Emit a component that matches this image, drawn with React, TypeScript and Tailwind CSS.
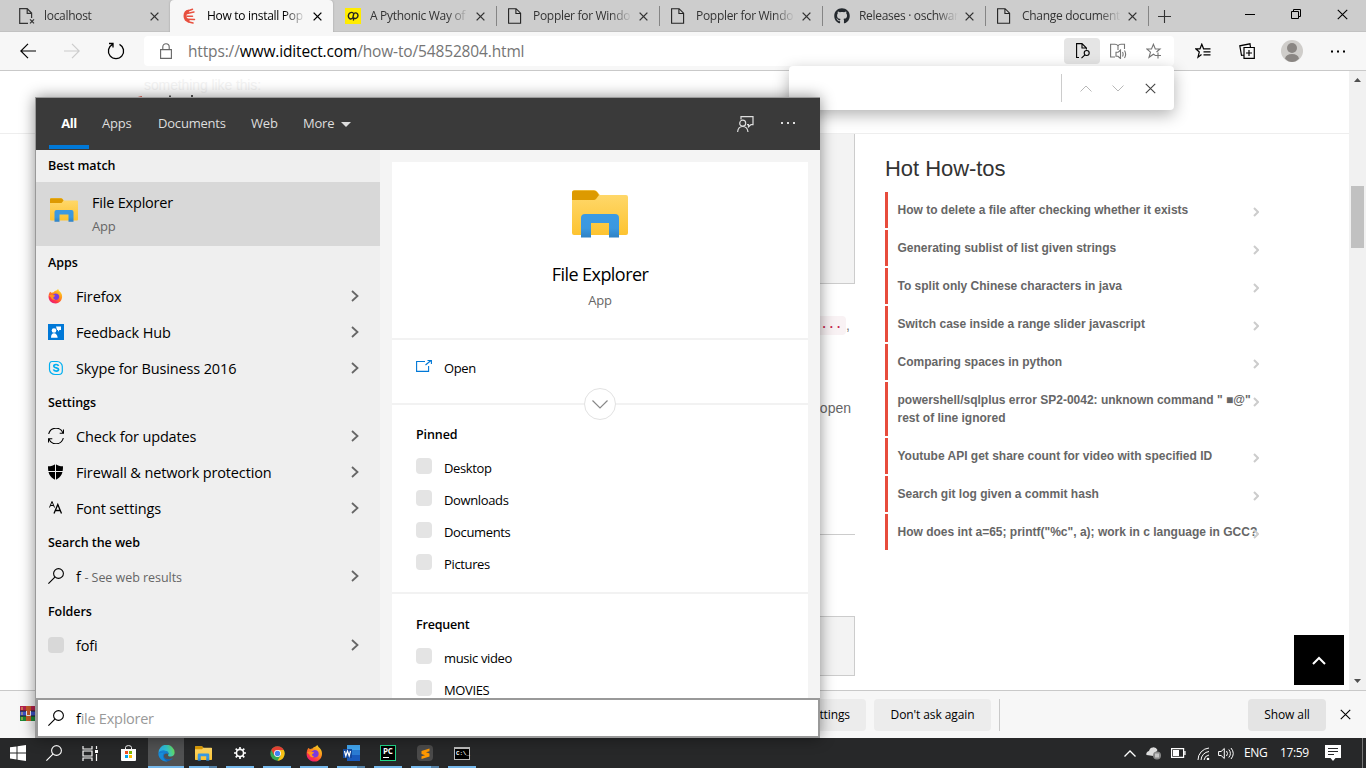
import React from 'react';
import { FaGithub } from 'react-icons/fa6';

type P = { className?: string };

const Svg = ({ w, h, vb, className = '', children }: { w: number; h: number; vb?: string; className?: string; children: React.ReactNode }) => (
  <svg width={w} height={h} viewBox={vb ?? `0 0 ${w} ${h}`} className={`block shrink-0 ${className}`} fill="none" stroke="currentColor">
    {children}
  </svg>
);

const Cross = ({ s = 10, className = '' }: { s?: number; className?: string }) => (
  <Svg w={s} h={s} vb="0 0 10 10" className={className}><path d="M.7.7l8.6 8.6M9.3.7L.7 9.3" /></Svg>
);
const PageIcon = () => (
  <Svg w={16} h={16} className="text-[#222]"><path d="M.600.7h7.500l4.500 4.500v10.1h-12zM7.900.7v4.800h4.700" strokeWidth="1.100" /></Svg>
);
const PageMissing = () => (
  <Svg w={17} h={17} className="text-[#333]"><path d="M9 15.3H.7V.7h7.5L12.6 5v5M8.2.7v4.6h4.4" strokeWidth="1.200" /><path d="M11 11.3l4 4M15 11.3l-4 4" strokeWidth="1.200" /></Svg>
);
const HandIcon = () => (
  <Svg w={16} h={16} className="text-[#e8503f]">
    <path d="M7 3C4.200 3.500 3 5.500 3 8s1.500 4.500 4.500 5" strokeWidth="3" />
    <path d="M4.500 3.500l6-2.200M5 5.500l7-1.500M5 8.200h5.500M5 11.200l7.500.3M6 13.700l5 1.300" strokeWidth="1.500" strokeLinecap="round" />
  </Svg>
);
const YellowIcon = () => (
  <Svg w={16} h={16}>
    <path d="M0 0h16v16H0z" fill="#ffec00" stroke="none" />
    <path d="M8.300 5C6.300 3.500 3.300 5 3.300 8s2.700 3.700 4.500 2l1-4.500c2-1.300 4.200-.3 4.200 2s-2.200 3.500-4 2.600L8.300 12.500" stroke="#222" strokeWidth="1.400" />
  </Svg>
);

const Folder = ({ w, h }: { w: number; h: number }) => (
  <svg width={w} height={h} viewBox="0 0 56 48" className="block shrink-0">
    <defs>
      <linearGradient id="fy" x1="0" y1="0" x2="0" y2="1"><stop offset="0" stopColor="#ffda70" /><stop offset="1" stopColor="#fdc331" /></linearGradient>
      <linearGradient id="fb" x1="0" y1="0" x2="0" y2="1"><stop offset="0" stopColor="#3b9ae3" /><stop offset=".6" stopColor="#3b98e0" /><stop offset="1" stopColor="#2f82c4" /></linearGradient>
    </defs>
    <path d="M0 3q0-3 3-3h19q2 0 3 1.500L28 5h26q2 0 2 2v36q0 2-2 2H2q-2 0-2-2z" fill="url(#fy)" />
    <path d="M0 2.500q0-2 2-2h20q2 0 3 1.500l2 3-3 4q-1 1-2 1H0z" fill="#dd9a00" />
    <path d="M9 47.500V28q0-4 4-4h30q4 0 4 4v19.500H37V33H19v14.500z" fill="url(#fb)" />
  </svg>
);

const Firefox = ({ s }: { s: number }) => (
  <svg width={s} height={s} viewBox="0 0 16 16" className="block shrink-0">
    <defs><linearGradient id="ffx" x1="0.85" y1="0" x2="0.2" y2="1"><stop offset="0" stopColor="#ffe226" /><stop offset=".45" stopColor="#ff8a1c" /><stop offset=".75" stopColor="#ff3647" /><stop offset="1" stopColor="#e31587" /></linearGradient></defs>
    <path d="M2.200 2.800q1 .2 1.500 1.300 1-.7 2.300-.7Q7 1.800 9 1.500 10.500 0 11 .2c.2 1.600 1.500 2 2.800 3.800 2.900 4 .7 11.500-5.700 11.500C3.300 15.500.3 12 .6 7.800.700 5.500 1.400 4 2.200 2.800z" fill="url(#ffx)" />
    <path d="M8.300 4.700c3.300.2 4.200 2.800 3.400 4.900-.8 2-3.500 2.700-5.400 1.600-1.600-.8-2-2.300-1.500-3.300 1 .4 2-.2 2.800-.8-1-.3-1.700-.5-2.300-.4.5-1.300 1.800-1.600 3-2z" fill="#7a3be0" />
    <path d="M1 7c.8-1 2-1 3.500-.7 1 .3 2.200.3 3.100.8-.5 1-1.700 1-1.900 1.900-.2 1 .9 2 2.200 1.800-2.500 1.700-4.500-.2-4.700-1.800z" fill="#ff9520" />
  </svg>
);

const Magnifier = ({ s, className = '' }: { s: number; className?: string }) => (
  <Svg w={s} h={s} vb="0 0 16 16" className={className}><circle cx="10.500" cy="5.500" r="4.900" strokeWidth="1.100" /><path d="M6.900 9.100L.4 15.600" strokeWidth="1.100" /></Svg>
);

const Hub = () => (
  <Svg w={16} h={16}>
    <path d="M0 0h16v16H0z" fill="#0078d7" stroke="none" />
    <g fill="#fff" stroke="none"><circle cx="6" cy="6.500" r="2.300" /><path d="M3 13.700q0-4.500 3-4.500t3.700 4.500zM8 2.500h5V6h-1.500L10 7.800V6H9z" /></g>
  </Svg>
);
const Skype = () => (
  <Svg w={16} h={16} className="text-[#00aff0]">
    <path d="M4 1.500h5c3 0 5.300 2.500 5.300 5V11c0 2-1.500 3.500-3.500 3.500H7c-3 0-5.500-2.500-5.500-5V4.500c0-1.800 1-3 2.500-3z" strokeWidth="1.200" />
    <path d="M10.500 6C10 4 5.700 4 5.800 6.200c.1 2.200 4.900 1.200 4.800 3.300-.1 2.200-4.600 2-5.100-.1" strokeWidth="1.700" />
  </Svg>
);
const Sync = () => (
  <Svg w={16} h={16} className="text-black"><path d="M.7 6A7.500 7.500 0 0 1 15 5M15.500 1.500v3.800h-3.800M15.300 10A7.500 7.500 0 0 1 1 11M.5 14.500v-3.800h3.800" strokeWidth="1.100" /></Svg>
);
const Shield = () => (
  <Svg w={16} h={16}><path d="M7.500 0C5.500 1.500 3 2.300 0 2.300c0 6.700 1.300 10.700 7.500 13.700C13.700 13 15 9 15 2.300 12 2.300 9.500 1.500 7.500 0z" fill="#000" stroke="none" /><path d="M7.500 0v16M0 7.500h15" stroke="#efefef" /></Svg>
);
const FontsIcon = () => (
  <Svg w={16} h={16} className="text-black"><path d="M1.500 7.500L4 1.500 6.500 7.500M2.300 5.500h3.400" /><path d="M6 13.500L9.800 4.500l3.700 9M7.200 10.500h5" strokeWidth="1.300" /></Svg>
);

const tabs = [
  { t: 'localhost', i: <PageMissing /> },
  { t: 'How to install Pop', i: <HandIcon /> },
  { t: 'A Pythonic Way of', i: <YellowIcon /> },
  { t: 'Poppler for Windo', i: <PageIcon /> },
  { t: 'Poppler for Windo', i: <PageIcon /> },
  { t: 'Releases · oschwar', i: <FaGithub size={16} className="text-[#24292e]" /> },
  { t: 'Change document', i: <PageIcon /> },
];

function TabStrip() {
  return (
    <div className="flex h-8 shrink-0 bg-[#cdcdcd] pl-[7px] text-[12px] text-[#333] shadow-[inset_0_-1px_0_#c2c2c2]">
      {tabs.map((tab, n) => (
        <div key={n} className={`flex w-[163px] shrink-0 items-center ${n === 1 ? 'rounded-t bg-[#f7f7f7] text-black shadow-[0_0_2px_#999]' : ''}`}>
          <div className={`h-5 w-px ${n > 2 ? 'bg-[#858585]' : ''}`} />
          <div className="flex w-9 pl-[11px]">{tab.i}</div>
          <div className="h-5 w-[99px] leading-5 tracking-[-0.3px] whitespace-nowrap [mask-image:linear-gradient(90deg,#000_78%,transparent)]">{tab.t}</div>
          <Cross s={9} className="ml-[7px] stroke-[1.500]" />
        </div>
      ))}
      <div className="flex items-center">
        <div className="h-5 w-px bg-[#858585]" />
        <Svg w={13} h={13} className="ml-[9px] text-[#333]"><path d="M6.500 0v13M0 6.500h13" strokeWidth="1.100" /></Svg>
      </div>
      <div className="mr-[18px] ml-auto flex h-7 items-center text-black">
        <Svg w={10} h={10} className="mr-9"><path d="M0 5.500h10" /></Svg>
        <Svg w={10} h={10} className="mr-9"><path d="M.5 2.500h7v7h-7zM2.500 2.500v-2h7v7h-2" /></Svg>
        <Cross s={11} />
      </div>
    </div>
  );
}

function Toolbar() {
  return (
    <div className="flex h-[39px] shrink-0 items-center border-b border-[#c9c9c9] bg-[#f7f7f7]">
      <Svg w={16} h={16} className="ml-5 text-black"><path d="M16 8H.8M8 .8L.8 8 8 15.200" strokeWidth="1.200" /></Svg>
      <Svg w={16} h={16} className="ml-7 text-[#ccc]"><path d="M0 8h15.200M8 .8L15.200 8 8 15.200" strokeWidth="1.200" /></Svg>
      <Svg w={18} h={18} className="ml-[27px] text-black"><path d="M12.500 2.300A7.600 7.600 0 1 1 5.500 2.300M2 1.500h4v4" strokeWidth="1.300" /></Svg>
      <div className="ml-[19px] flex h-[30px] w-[1030px] items-center rounded bg-white">
        <Svg w={12} h={16} className="ml-4 text-[#666]"><path d="M.6 6.600h10.800v8.800H.6zM2.800 6.600V4a3.200 3.200 0 0 1 6.400 0v2.600" strokeWidth="1.100" /></Svg>
        <div className="ml-4 text-[15.500px] leading-5 tracking-[-0.15px] whitespace-nowrap text-[#757575]">https://<span className="text-black">www.iditect.com</span>/how-to/54852804.html</div>
        <div className="ml-auto flex h-[26px] w-9 items-center justify-center rounded-sm bg-[#e5e5e5]">
          <Svg w={16} h={16} className="text-black"><path d="M5 14.500H2.600V.6H8L12.400 5v1.500M8 .6V5h4.400" strokeWidth="1.100" /><circle cx="12.700" cy="10" r="2.500" strokeWidth="1.100" /><path d="M10.900 11.800L7.500 15.200" strokeWidth="1.100" /></Svg>
        </div>
        <Svg w={17} h={16} className="ml-2.5 text-[#757575]"><path d="M5 14H.6V1.300H5q2 0 3 1.500 1-1.500 3-1.500h3.500V6M8 2.800V7M6 9.300h2l2.500-2.300v8.500L8 13.300H6zM12.500 9q1.200 2.200 0 4.500M14.500 7.500q2.300 3.800 0 7.500" strokeWidth="1.100" /></Svg>
        <Svg w={16} h={16} className="mr-3 ml-[19px] text-[#757575]"><path d="M9 12.200l-1.600-1L3 14.300l1.500-5.200L.8 6H5.500L7.400 1.300 9.300 6H14l-3.500 3M9 12.500h6M12 9.500v6" strokeWidth="1.100" /></Svg>
      </div>
      <Svg w={16} h={16} className="ml-[21px] text-black"><path d="M6.500 11.500L3 14.200 4.300 9 .8 5.800H5L6.800 1.200 8.600 5.800h6.900M8.500 8.800h7M8.500 11.800h7" strokeWidth="1.200" /></Svg>
      <Svg w={16} h={16} className="ml-7 text-black"><path d="M5 4.500h10.300v10.800H5zM10 7v6M7 10h6M5 12l-2.500.3L.8 2.800 11 .8l.5 3.500" strokeWidth="1.200" /></Svg>
      <Svg w={22} h={22} className="ml-[26px]"><g stroke="none"><circle cx="11" cy="11" r="11" fill="#cfcdca" /><circle cx="11" cy="8" r="5" fill="#8a8683" /><path d="M4 18.500q1-4.500 7-4.500t7 4.500q-3 3.500-7 3.500t-7-3.500z" fill="#8a8683" /></g></Svg>
      <Svg w={14} h={3} className="ml-7 text-black"><path d="M0 1.500h2M6 1.500h2M12 1.500h2" strokeWidth="2" /></Svg>
    </div>
  );
}

const howtos: [string, string?][] = [
  ['How to delete a file after checking whether it exists'],
  ['Generating sublist of list given strings'],
  ['To split only Chinese characters in java'],
  ['Switch case inside a range slider javascript'],
  ['Comparing spaces in python'],
  ['powershell/sqlplus error SP2-0042: unknown command " ■@"', 'rest of line ignored'],
  ['Youtube API get share count for video with specified ID'],
  ['Search git log given a commit hash'],
  ['How does int a=65; printf("%c", a); work in c language in GCC?'],
];

function WebPage() {
  return (
    <div className="flex h-[619px] shrink-0 bg-white font-['Liberation_Sans',sans-serif]">
      <div className="flex w-[1349px] flex-col">
        <div className="h-[63px] shrink-0 border-b border-[#eee]">
          <div className="ml-36 pt-[5px] text-[14px] leading-[18px] tracking-[-0.1px] text-[#f3f3f3]">something like this:</div>
          <Svg w={62} h={6} className="ml-[134px]">
            <path d="M2 4.500l6-1.500" stroke="#e8503f" strokeWidth="2" />
            <path d="M20 3.500h6M41 3.500h6" stroke="#999" />
            <path d="M35 2.500h2M58 1v3" stroke="#555" strokeWidth="2" />
          </Svg>
        </div>
        <div className="flex">
          <div className="ml-[115px] flex w-[740px] flex-col">
            <div className="h-[150px] border-r border-b border-[#ccc] bg-[#f3f3f3]" />
            <div className="mt-8 flex h-[19px] justify-end pr-[5px] text-[14px] leading-[19px] text-[#777]">
              <span className="rounded bg-[#f9f2f4] px-1 font-['Liberation_Mono',monospace] text-[12px] font-bold text-[#c7254e]">s...</span><span>,</span>
            </div>
            <div className="mt-[63px] pr-[4px] text-right text-[14px] leading-5 text-[#666]">open</div>
            <div className="mt-[116px] h-px bg-[#ccc]" />
            <div className="mt-[81px] h-[60px] border border-[#ccc] bg-[#f3f3f3]" />
          </div>
          <div className="ml-[30px] w-[376px]">
            <h3 className="h-[58px] pt-[21px] text-[22px] leading-7 tracking-[-0.05px] text-[#333]">Hot How-tos</h3>
            <div className="flex flex-col gap-[2px]">
              {howtos.map(([a, b], i) => (
                <div key={i} className="relative border-l-[3px] border-[#e74c3c] py-[9px] pl-[9.500px] text-[12px] leading-[18px] font-bold whitespace-nowrap text-[#666]">
                  {a}{b && <><br />{b}</>}
                  <Svg w={6} h={10} className="absolute top-[15px] right-[2px] text-[#ccc]"><path d="M1 1l4 4-4 4" strokeWidth="2" /></Svg>
                </div>
              ))}
            </div>
          </div>
        </div>
      </div>
      <div className="flex w-[17px] flex-col items-center bg-[#f1f1f1] pt-[7px] pb-[7px]">
        <Svg w={7} h={4}><path d="M0 4l3.500-4L7 4z" fill="#505050" stroke="none" /></Svg>
        <div className="mt-[104px] h-[62px] w-[13px] bg-[#c1c1c1]" />
        <Svg w={7} h={4} className="mt-auto"><path d="M0 0l3.500 4L7 0z" fill="#505050" stroke="none" /></Svg>
      </div>
    </div>
  );
}

function DownloadBar() {
  return (
    <div className="flex h-12 shrink-0 items-center border-t border-[#c9c9c9] bg-[#f7f7f7] text-[12px] tracking-[-0.1px] text-black">
      <svg width="17" height="15" viewBox="0 0 17 15" className="mb-0.5 ml-5 block">
        <path d="M0 0h17v5H0z" fill="#b3214d" /><path d="M0 5h17v5H0z" fill="#3c50c8" /><path d="M0 10h17v5H0z" fill="#1c8a35" />
        <path d="M2 1v3M2 6v3M2 11v3" stroke="#e8c35a" /><path d="M0 5h17M0 10h17" stroke="#222" /><path d="M6 0h5v15H6z" fill="#c65a28" /><path d="M6.500 5v4.500h4V5" stroke="#eee" fill="none" />
      </svg>
      <div className="ml-[749px] flex h-8 w-20 items-center justify-end rounded-sm bg-[#ececec] pr-4">Settings</div>
      <div className="ml-2 flex h-8 w-[117px] items-center justify-center rounded-sm bg-[#ececec]">Don't ask again</div>
      <div className="ml-2 h-8 w-px bg-[#c9c9c9]" />
      <div className="ml-auto flex h-8 w-[78px] items-center justify-center rounded-sm bg-[#e4e4e4]">Show all</div>
      <Cross s={11} className="mr-[15px] mb-px ml-[14px]" />
    </div>
  );
}

const Heading = ({ children, className = 'h-8' }: P & { children: React.ReactNode }) => (
  <div className={`flex shrink-0 items-center pt-px pl-3 text-[12.500px] font-semibold tracking-[-0.05px] text-black ${className}`}>{children}</div>
);
const Blank = ({ className = 'bg-[#d8d8d8]' }: P) => <div className={`size-4 shrink-0 rounded-sm ${className}`} />;

const Row = ({ icon, children }: { icon: React.ReactNode; children: React.ReactNode }) => (
  <div className="flex h-9 shrink-0 items-center pr-[21px] pl-3 text-[14.500px] tracking-[-0.14px] whitespace-nowrap text-black">
    <div className="mb-0.5 flex w-7">{icon}</div>
    <div>{children}</div>
    <Svg w={8} h={12} className="mb-0.5 ml-auto text-[#666]"><path d="M1 1l5.500 5L1 11" strokeWidth="1.800" /></Svg>
  </div>
);

const Place = ({ children }: { children: React.ReactNode }) => (
  <div className="flex h-8 shrink-0 items-center gap-3 pl-6 text-[13px] tracking-[-0.36px] text-black">
    <Blank className="mb-1.5 bg-[#e4e4e4]" />{children}
  </div>
);

function SearchPanel() {
  return (
    <div className="absolute top-[97px] left-[35px] flex h-[641px] w-[785px] flex-col border-t border-l border-[#999] bg-[#f4f4f4] shadow-[0_0_14px_rgba(0,0,0,0.45)]">
      <div className="flex h-[52px] shrink-0 items-center bg-[#3a3a3a] text-[13px] tracking-[-0.2px] text-[#dedede]">
        <div className="ml-[13px] flex h-full w-10 flex-col items-center justify-between pt-[15px] pb-px">
          <span className="leading-5 font-bold tracking-[-0.4px] text-white">All</span><div className="h-1 w-10 bg-[#0078d7]" />
        </div>
        <span className="ml-[13px] w-14">Apps</span>
        <span className="w-[93px]">Documents</span>
        <span className="w-[52px]">Web</span>
        <span className="w-[38px]">More</span>
        <Svg w={10} h={5}><path d="M0 0h10L5 5z" fill="#ddd" stroke="none" /></Svg>
        <Svg w={17} h={16} className="ml-[386px]"><g strokeWidth="1.200"><circle cx="5.700" cy="7.200" r="3" /><path d="M.6 16q.4-5.500 5.100-5.500T11 16M4 3.500V.6h12v8h-2l-2.500 2.200V8.600H10" /></g></Svg>
        <Svg w={14} h={2} className="mb-0.5 ml-[27px]"><path d="M0 1h2M6 1h2M12 1h2" strokeWidth="2" /></Svg>
      </div>
      <div className="flex h-[548px] shrink-0">
        <div className="flex w-[344px] flex-col bg-[#efefef]">
          <Heading className="h-8 pt-[2px]">Best match</Heading>
          <div className="flex h-16 shrink-0 items-center bg-[#d8d8d8] pl-3.5">
            <div className="mb-2"><Folder w={28} h={24} /></div>
            <div className="ml-3.5 flex flex-col gap-[3px] pt-px">
              <span className="text-[14.500px] leading-5 tracking-[-0.2px] text-black">File Explorer</span>
              <span className="text-[13px] leading-5 tracking-[-0.25px] text-[#666]">App</span>
            </div>
          </div>
          <Heading className="h-[33px]">Apps</Heading>
          <Row icon={<Firefox s={15} />}>Firefox</Row>
          <Row icon={<Hub />}>Feedback Hub</Row>
          <Row icon={<Skype />}>Skype for Business 2016</Row>
          <Heading>Settings</Heading>
          <Row icon={<Sync />}>Check for updates</Row>
          <Row icon={<Shield />}>Firewall &amp; network protection</Row>
          <Row icon={<FontsIcon />}>Font settings</Row>
          <Heading>Search the web</Heading>
          <Row icon={<Magnifier s={16} />}>f <span className="text-[12.500px] tracking-[-0.04px] text-[#666]">- See web results</span></Row>
          <Heading className="h-[33px]">Folders</Heading>
          <Row icon={<Blank />}>fofi</Row>
        </div>
        <div className="mt-3 ml-3 flex h-[536px] w-[416px] flex-col overflow-hidden bg-white">
          <div className="flex h-[178px] shrink-0 flex-col items-center border-b-2 border-[#f2f2f2] pt-7">
            <Folder w={56} h={48} />
            <div className="mt-[22px] text-[18px] leading-7 tracking-[-0.55px] text-black">File Explorer</div>
            <div className="mt-1 text-[13px] leading-4 tracking-[-0.2px] text-[#666]">App</div>
          </div>
          <div className="relative flex h-[65px] shrink-0 items-center border-b-2 border-[#f2f2f2] pb-1.5 pl-6 text-[13px] tracking-[-0.35px] text-black">
            <Svg w={16} h={12} className="mb-1.5 text-[#0078d7]"><path d="M9 1.500H.6v9.900h12V6M9.500 5L15 .5M11.500.5H15.400V4" strokeWidth="1.100" /></Svg>
            <span className="ml-3">Open</span>
            <div className="absolute -bottom-[17px] left-[192px] flex size-8 items-center justify-center rounded-full border border-[#e2e2e2] bg-white">
              <Svg w={16} h={9} className="text-[#888]"><path d="M.5.5L8 8 15.500.5" strokeWidth="1.200" /></Svg>
            </div>
          </div>
          <div className="flex h-[189px] shrink-0 flex-col border-b-2 border-[#f2f2f2] pt-4">
            <div className="mb-1 pl-6 text-[12.500px] leading-7 font-semibold tracking-[-0.1px] text-black">Pinned</div>
            {['Desktop', 'Downloads', 'Documents', 'Pictures'].map(x => <Place key={x}>{x}</Place>)}
          </div>
          <div className="shrink-0 pt-[17px]">
            <div className="mb-1 pl-6 text-[12.500px] leading-7 font-semibold tracking-[-0.2px] text-black">Frequent</div>
            <Place>music video</Place>
            <Place>MOVIES</Place>
          </div>
        </div>
      </div>
      <div className="flex h-10 shrink-0 items-center border-2 border-[#999] bg-white pt-px pl-2.5 text-[14.500px] tracking-[-0.25px] text-[#999]">
        <Magnifier s={16} className="mr-3 mb-0.5 text-black" /><span className="text-black">f</span>ile Explorer
      </div>
    </div>
  );
}

function Edge() {
  return (
    <svg width="17" height="17" viewBox="0 0 17 17" className="block">
      <defs>
        <linearGradient id="edt" x1="0" y1=".5" x2="1" y2=".3"><stop offset="0" stopColor="#2aa9e8" /><stop offset=".5" stopColor="#30c3d0" /><stop offset="1" stopColor="#6bdd4e" /></linearGradient>
        <linearGradient id="edb" x1="0" y1="0" x2="0" y2="1"><stop offset="0" stopColor="#1787d8" /><stop offset="1" stopColor="#0f60b5" /></linearGradient>
      </defs>
      <path d="M.5 8A8 8 0 0 1 16.600 7.500c.2 2.500-1.600 4-4 4-2.200 0-3-1-2.300-1.900C11.300 8 9.600 6 7 6 4 5.800 1.500 6.600.5 8z" fill="url(#edt)" />
      <path d="M.5 8C1.500 6 4 5 6.500 5.400c2.700.3 4.300 2 3.900 3.600C8 7.500 5.800 9 5.800 11c0 3 4.500 4.600 9.200 1.700-3 4.800-9.700 5-12.700.8C.900 12 .2 10 .5 8z" fill="url(#edb)" />
      <path d="M6.500 7.500C3.500 9 4.500 15 9.500 16.200 6 17.200.5 14.500.5 8.500" fill="#1b9de2" opacity=".6" />
    </svg>
  );
}

function Chrome() {
  return (
    <svg width="15" height="15" viewBox="0 0 48 48" className="block">
      <circle cx="24" cy="24" r="23" fill="#34a853" />
      <path d="M4 12.500A23 23 0 0 1 44 13H24l-10 17z" fill="#ea4335" />
      <path d="M24 13h20A23 23 0 0 1 24 47l10-17z" fill="#fbc116" />
      <circle cx="24" cy="24" r="11" fill="#fff" /><circle cx="24" cy="24" r="8.500" fill="#4285f4" />
    </svg>
  );
}

function TaskBar() {
  const apps: [React.ReactNode, boolean][] = [
    [<Folder w={17} h={15} />, true],
    [<Svg w={12} h={12} vb="0 0 14 14" className="text-white"><circle cx="7" cy="7" r="4.200" strokeWidth="1.900" /><path d="M7 0v3M7 11v3M0 7h3M11 7h3M2 2l2 2M10 10l2 2M12 2l-2 2M4 10l-2 2" strokeWidth="2" /></Svg>, false],
    [<Chrome />, false],
    [<Firefox s={17} />, false],
    [<svg width="17" height="16" viewBox="0 0 17 16" className="block"><path d="M4 0h13v16H4z" fill="#185abd" /><path d="M4 0h13v5H4z" fill="#41a5ee" /><path d="M4 5h13v5H4z" fill="#2b7cd3" /><path d="M0 4h9v9H0z" fill="#144a9e" /><path d="M1.500 6l1.300 5 1.700-5 1.700 5 1.300-5" stroke="#fff" strokeWidth="1.200" fill="none" /></svg>, true],
    [<div className="size-4 border border-[#21d789] bg-black pl-[2px] text-[8px] leading-[9px] font-bold tracking-[-0.3px] text-white">PC<div className="mt-[2px] h-px w-[6px] bg-white" /></div>, false],
    [<div className="flex size-4 items-center justify-center rounded-sm bg-[#4a4a4a]"><Svg w={9} h={12}><path d="M.5 4l8-2.500v2.700L5 5.300 8.500 6.500v3L.5 12V9.300L4 8.200.5 7z" fill="#ff9800" stroke="none" /></Svg></div>, true],
    [<div className="h-[13px] w-4 border border-t-2 border-[#bbb] bg-black pl-px font-['Liberation_Mono',monospace] text-[6px] leading-[9px] font-bold tracking-[-0.2px] text-white">C:\_</div>, false],
  ];
  return (
    <div className="flex h-[30px] shrink-0 items-center bg-[#272829] text-[12px] tracking-[-0.4px] text-white">
      <Svg w={16} h={16} className="ml-2.5"><path d="M0 2.300L6.500 1.400v6H0zM7.500 1.200L16 0v7.400H7.500zM0 8.500h6.500v6L0 13.600zM7.500 8.500H16V16l-8.500-1.200z" fill="#fff" stroke="none" /></Svg>
      <Magnifier s={16} className="ml-5" />
      <Svg w={17} h={15} className="ml-5"><path d="M1 0v3h9V0M1 5h9v5H1zM1 15v-3h9v3M14.500 0v3M14.500 8v7" strokeWidth="1.200" /><path d="M13 4h3v3h-3z" fill="#fff" stroke="none" /></Svg>
      <Svg w={15} h={16} className="ml-[22px]"><path d="M4.500 4V2.500Q4.500.6 7.500.6t3 1.900V4" /><path d="M0 4h15v11q0 1-1 1H1q-1 0-1-1z" fill="#fff" stroke="none" /><g stroke="none"><path d="M4 6h3v3H4z" fill="#f25022" /><path d="M8 6h3v3H8z" fill="#7fba00" /><path d="M4 10h3v3H4z" fill="#00a4ef" /><path d="M8 10h3v3H8z" fill="#ffb900" /></g></Svg>
      <div className="ml-3 flex h-[30px] w-9 flex-col items-center justify-between bg-[#505152] pt-[7px]">
        <Edge />
        <div className="h-[2px] w-9 bg-[#76b9ed]" />
      </div>
      <div className="ml-[5px] flex gap-[9px]">
        {apps.map(([icon, dbl], i) => (
          <div key={i} className="flex h-[30px] w-7 flex-col">
            <div className="flex h-7 items-center justify-center pt-[2px]">{icon}</div>
            <div className="flex h-[2px]"><div className="flex-1 bg-[#76b9ed]" />{dbl && <div className="w-2 bg-[#5682a7]" />}</div>
          </div>
        ))}
      </div>
      <Svg w={12} h={7} className="ml-auto"><path d="M.5 6.500L6 1l5.500 5.500" strokeWidth="1.300" /></Svg>
      <Svg w={16} h={14} className="ml-2.5"><path d="M.5 9a3 3 0 0 1 2.500-4 4.500 4.500 0 0 1 8.500-1l-4 6z" fill="#ddd" stroke="none" /><circle cx="11" cy="9.500" r="4" fill="#888" stroke="none" /><path d="M10 7.500v4M12 7.500v4" /></Svg>
      <Svg w={15} h={10} className="ml-[9px]"><path d="M.6.6h12v8.800h-12zM14 3v4" strokeWidth="1.200" /><path d="M2 2h6v6H2z" fill="#fff" stroke="none" /></Svg>
      <Svg w={13} h={13} className="ml-[11px]"><path d="M1 13A12 12 0 0 1 12 1M4 13a9 9 0 0 1 8-8.500M7 13a6 6 0 0 1 5-5" /><circle cx="11" cy="12" r="1.300" fill="#fff" stroke="none" /></Svg>
      <Svg w={16} h={13} className="ml-2"><path d="M.6 4.500h2.500L6.300 1.500v10L3.100 8.500H.6zM8.500 4q2 2.500 0 5M10.800 2.500q3.200 4 0 8M13 1q4.500 5.500 0 11" /></Svg>
      <span className="ml-[10px] w-[36px]">ENG</span>
      <span className="w-[45px]">17:59</span>
      <Svg w={16} h={16}><path d="M0 0h16v13h-5.500L8 16l-2.500-3H0z" fill="#fff" stroke="none" /><path d="M3 3.500h10M3 6.500h10M3 9.500h6" stroke="#272829" /></Svg>
      <div className="mr-[3px] ml-[21px] h-full w-px bg-[#777]" />
    </div>
  );
}

export default function App() {
  return (
    <div className="relative flex h-[768px] w-[1366px] flex-col overflow-hidden bg-white font-['Open_Sans',sans-serif]">
      <TabStrip />
      <Toolbar />
      <WebPage />
      <DownloadBar />
      <TaskBar />
      <div className="absolute top-[66px] left-[789px] flex h-11 w-[385px] items-center rounded bg-white shadow-[0_5px_16px_rgba(0,0,0,0.3)]">
        <div className="ml-[272px] h-7 w-px bg-[#ccc]" />
        <Svg w={12} h={7} className="ml-[18px] text-[#b8b8b8]"><path d="M.5 6.500L6 1l5.500 5.500" /></Svg>
        <Svg w={12} h={7} className="ml-5 text-[#b8b8b8]"><path d="M.5.5L6 6 11.500.5" /></Svg>
        <Cross s={11} className="ml-[21px] text-[#444]" />
      </div>
      <div className="absolute top-[635px] left-[1294px] flex size-[50px] items-center justify-center bg-black text-white">
        <Svg w={14} h={9}><path d="M1 8l6-6 6 6" strokeWidth="2" /></Svg>
      </div>
      <SearchPanel />
    </div>
  );
}
